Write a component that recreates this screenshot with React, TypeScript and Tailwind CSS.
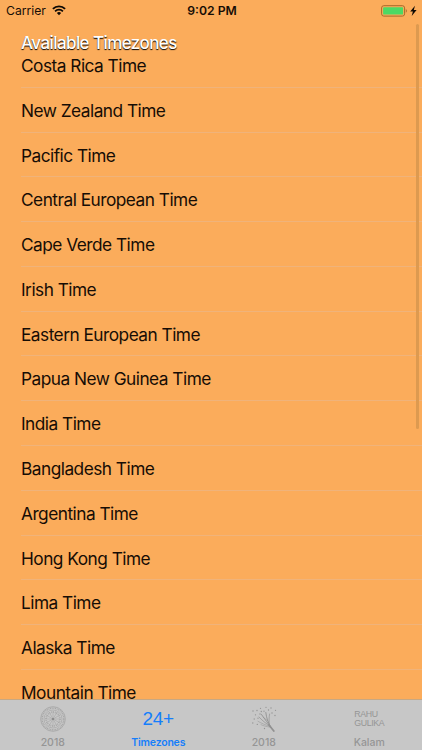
import type { ReactNode } from "react";

const ZONES = [
  "Costa Rica Time",
  "New Zealand Time",
  "Pacific Time",
  "Central European Time",
  "Cape Verde Time",
  "Irish Time",
  "Eastern European Time",
  "Papua New Guinea Time",
  "India Time",
  "Bangladesh Time",
  "Argentina Time",
  "Hong Kong Time",
  "Lima Time",
  "Alaska Time",
  "Mountain Time",
];

function WifiIcon() {
  return (
    <svg viewBox="0 0 14 11" className="h-[11px] w-[14px]" fill="none" stroke="#0d0803">
      <path d="M0.9 3.9A8.7 8.7 0 0 1 13.1 3.9" strokeWidth="1.9" />
      <path d="M3.1 6.3A5.5 5.5 0 0 1 10.9 6.3" strokeWidth="1.8" />
      <path d="M7 10.3L4.9 8.1A3 3 0 0 1 9.1 8.1Z" fill="#0d0803" stroke="none" />
    </svg>
  );
}

function BatteryIcon() {
  return (
    <svg viewBox="0 0 37 12" className="h-[12px] w-[37px]">
      <rect x="0.6" y="0.7" width="23" height="10.4" rx="2.2" fill="none" stroke="#a76b2b" strokeWidth="1" />
      <rect x="2.1" y="2.2" width="20" height="7.4" rx="0.9" fill="#4cd964" />
      <path d="M24.8 4.1C26.2 4.6 26.2 7.2 24.8 7.7Z" fill="#a76b2b" />
      <path d="M34 0.8L29.2 6.6H31.9L30.7 11L35.6 5.1H32.8Z" fill="#0d0803" />
    </svg>
  );
}

function WheelIcon() {
  const spokes = Array.from({ length: 12 }, (_, i) => i * 30);
  return (
    <svg viewBox="0 0 26 26" className="h-[26px] w-[26px]" fill="none" stroke="#a3a3a3">
      <circle cx="13" cy="13" r="12.3" strokeWidth="0.8" />
      <circle cx="13" cy="13" r="10.8" strokeWidth="1.3" strokeDasharray="0.9 0.8" />
      <circle cx="13" cy="13" r="9" strokeWidth="0.6" />
      <circle cx="13" cy="13" r="6.9" strokeWidth="1.7" strokeDasharray="0.7 1.1" />
      {spokes.map((a) => (
        <path key={a} d="M13 11.5V5" strokeWidth="0.5" transform={`rotate(${a} 13 13)`} />
      ))}
      <circle cx="13" cy="13" r="1.3" fill="#8c8c8c" stroke="none" />
    </svg>
  );
}

const SPARKS = [
  [2, 5], [6, 4.5], [9.5, 2.3], [15, 1.3], [20, 2], [24.5, 4.3], [13, 5.2], [17.5, 4], [21, 7], [4.5, 8.8],
  [9, 8], [3.2, 13], [1.8, 17], [7, 12.2], [24, 9.5], [6.3, 18.4], [13.5, 22.5], [10.3, 5.5],
];

function FireworkIcon() {
  return (
    <svg viewBox="0 0 26 26" className="h-[26px] w-[26px]" fill="none" stroke="#919191" strokeLinecap="round">
      <path d="M18 19L22.8 25" strokeWidth="1.8" />
      <path d="M20 21.5C17.5 18 14 13.5 10.5 8.5M19.5 20.5C17 16.5 15.5 12 14.8 6.5" strokeWidth="0.9" />
      <path d="M18.5 19C17.8 15 18 11 18.6 8M19 20C15 17.5 10.5 14 8 11" strokeWidth="0.7" />
      <path d="M19.5 20.5C14 19 10 17 7 15.3M20 21.3C15 20.5 12.5 19.9 10 18.7M17 15L12.5 11.5" strokeWidth="0.5" />
      {SPARKS.map(([x, y]) => (
        <circle key={`${x}-${y}`} cx={x} cy={y} r="0.65" fill="#929292" stroke="none" />
      ))}
    </svg>
  );
}

type TabProps = {
  label: string;
  active?: boolean;
  labelClass: string;
  children: ReactNode;
};

function Tab({ label, active, labelClass, children }: TabProps) {
  return (
    <button type="button" className={`flex flex-1 flex-col items-center ${active ? "text-[#157efb]" : "text-[#959595]"}`}>
      <span className="mt-[6px] flex h-[26px] items-center justify-center">{children}</span>
      <span className={`mt-[4px] text-[10.5px] leading-[14px] ${labelClass}`}>{label}</span>
    </button>
  );
}

export default function App() {
  return (
    <div className="relative flex h-[750px] w-[422px] flex-col overflow-hidden bg-[#fbac5b] font-['Inter','Liberation_Sans',sans-serif] text-[#160d05]">
      <header className="flex h-[22px] shrink-0 items-center pr-[4px] pl-[6px] text-[12.2px]">
        <div className="flex flex-1 items-center gap-[6px]">
          <span>Carrier</span>
          <WifiIcon />
        </div>
        <span className="text-center font-semibold">9:02 PM</span>
        <div className="flex flex-1 justify-end">
          <BatteryIcon />
        </div>
      </header>

      <main className="min-h-0 flex-1 pl-[21px]">
        <h1 className="mt-[9px] h-[12px] text-[17px] leading-[24px] font-medium tracking-[-0.58px] text-white [text-shadow:0_1px_1px_#000]">
          Available Timezones
        </h1>
        <ul>
          {ZONES.map((zone) => (
            <li
              key={zone}
              className="flex h-[44.79px] items-center border-b border-[#f0b37a] pt-[2.2px] text-[17.3px] tracking-[-0.52px] last:border-b-0 last:pt-[1px]"
            >
              {zone}
            </li>
          ))}
        </ul>
      </main>

      <div className="absolute top-[24px] right-[3px] h-[405px] w-[3px] rounded-full bg-[#dd9a50]" />

      <nav className="relative flex h-[51px] shrink-0 border-t border-[#c7a883] bg-[#c7c7c7]">
        <Tab label="2018" labelClass="font-medium">
          <WheelIcon />
        </Tab>
        <Tab label="Timezones" active labelClass="font-semibold tracking-[-0.2px]">
          <span className="font-['Liberation_Sans',sans-serif] text-[19px] tracking-[-0.3px]">24+</span>
        </Tab>
        <Tab label="2018" labelClass="font-medium">
          <FireworkIcon />
        </Tab>
        <Tab label="Kalam" labelClass="font-medium">
          <span className="text-left font-['Liberation_Sans',sans-serif] text-[8.8px] leading-[9px] tracking-[-0.4px]">
            RAHU
            <br />
            GULIKA
          </span>
        </Tab>
      </nav>
    </div>
  );
}
